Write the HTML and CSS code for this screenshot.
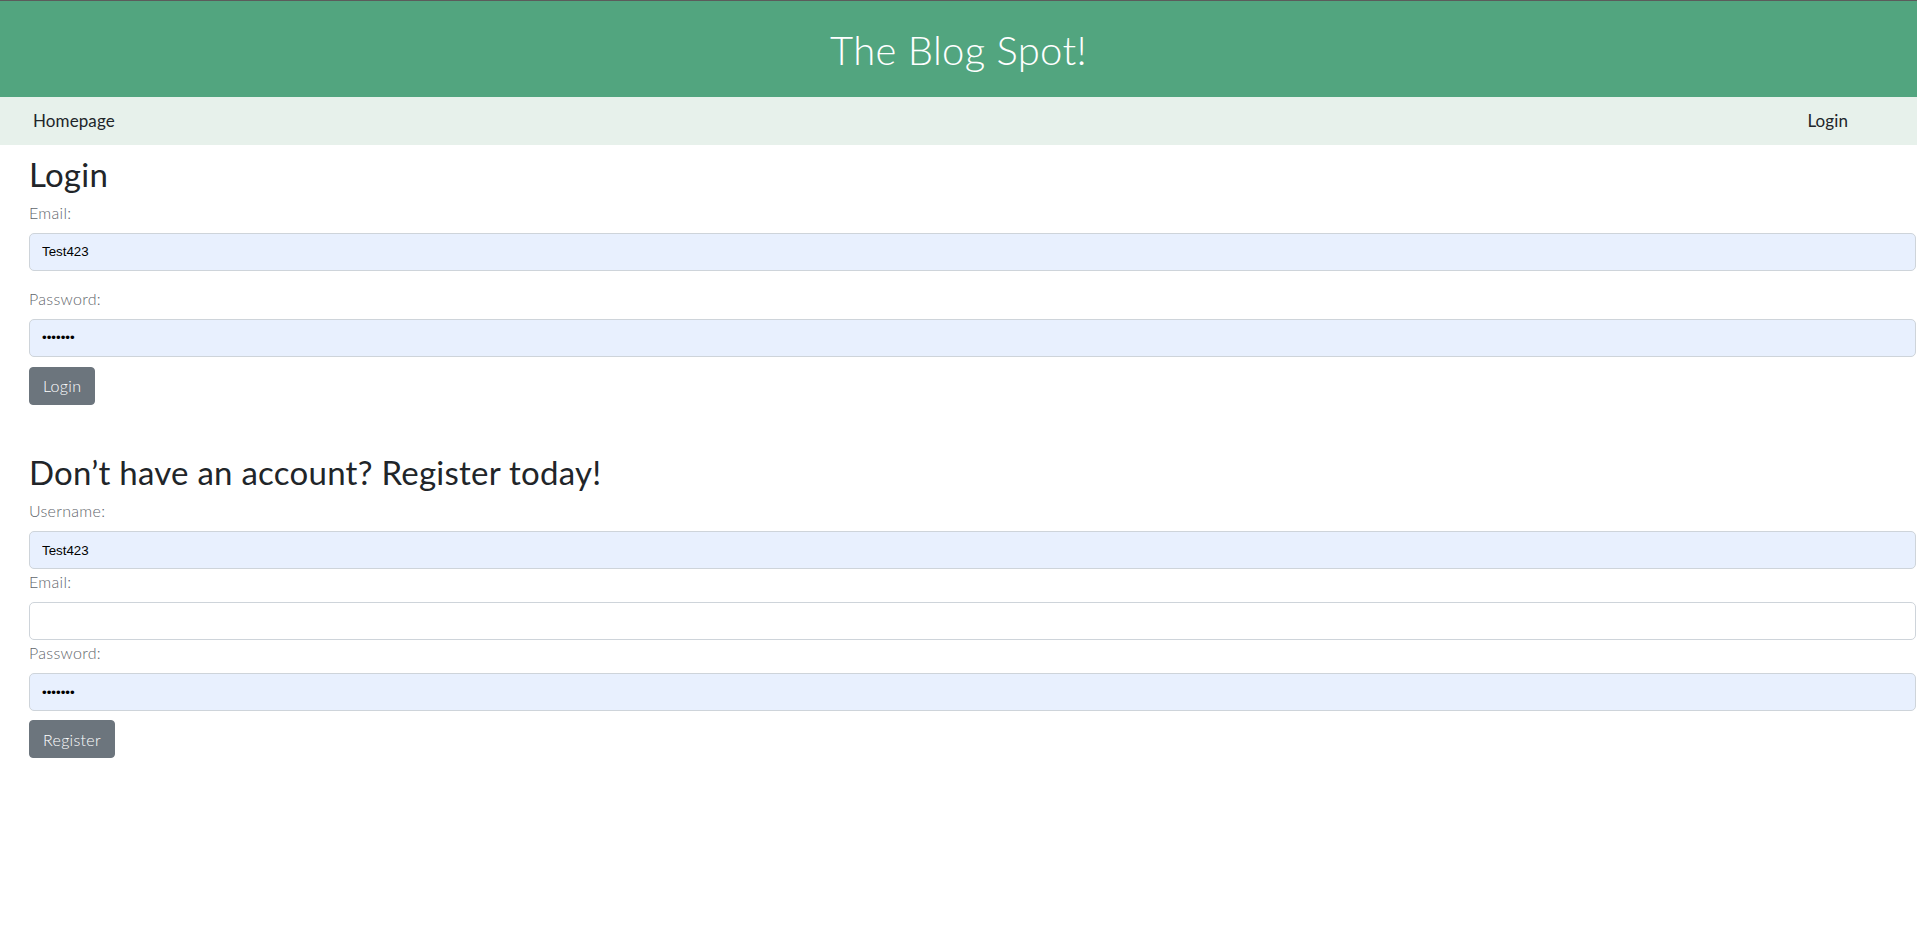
FILE: index.html
```html
<!DOCTYPE html>
<html lang="en">
<head>
<meta charset="utf-8">
<title>The Blog Spot!</title>
<link rel="stylesheet" href="styles.css">
</head>
<body>
<header class="masthead">
  <h1 class="site-title">The Blog Spot!</h1>
</header>
<nav class="navbar">
  <a class="nav-link" href="#">Homepage</a>
  <a class="nav-link" href="#">Login</a>
</nav>
<main class="content">
  <section class="login-section">
    <h2 class="section-title">Login</h2>
    <form class="form">
      <div class="field field-spaced">
        <label class="field-label" for="login-email">Email:</label>
        <input class="field-input autofilled" id="login-email" type="text" value="Test423">
      </div>
      <div class="field">
        <label class="field-label" for="login-password">Password:</label>
        <input class="field-input autofilled" id="login-password" type="password" value="1234567">
      </div>
      <button class="btn" type="button">Login</button>
    </form>
  </section>
  <section class="register-section">
    <h2 class="section-title">Don’t have an account? Register today!</h2>
    <form class="form">
      <div class="field">
        <label class="field-label" for="reg-username">Username:</label>
        <input class="field-input autofilled" id="reg-username" type="text" value="Test423">
      </div>
      <div class="field">
        <label class="field-label" for="reg-email">Email:</label>
        <input class="field-input" id="reg-email" type="text" value="">
      </div>
      <div class="field">
        <label class="field-label" for="reg-password">Password:</label>
        <input class="field-input autofilled" id="reg-password" type="password" value="1234567">
      </div>
      <button class="btn btn-tight" type="button">Register</button>
    </form>
  </section>
</main>
</body>
</html>
```
FILE: styles.css
```css
* {
  box-sizing: border-box;
}

html, body {
  margin: 0;
  padding: 0;
}

body {
  font-family: Lato, "Noto Sans", sans-serif;
  color: #212529;
  background: #fff;
  font-size: 16px;
  line-height: 1.5;
}

.masthead {
  height: 97px;
  background: #52a57f;
  border-top: 1px solid #5b5b5b;
  display: flex;
  align-items: center;
  justify-content: center;
}

.site-title {
  margin: 0;
  font-size: 40px;
  font-weight: 300;
  color: #fff;
  line-height: 1.2;
  letter-spacing: 0.3px;
  padding-top: 2px;
}

.navbar {
  height: 48px;
  background: #e7f1eb;
  display: flex;
  align-items: center;
  justify-content: space-between;
  padding: 0 69px 0 33px;
}

.nav-link {
  font-size: 17px;
  color: #212529;
  text-decoration: none;
  letter-spacing: 0.1px;
}

.content {
  padding: 0 1px 0 29px;
}

.section-title {
  font-size: 33px;
  font-weight: 400;
  line-height: 1.2;
  margin: 10px 0 6px;
  color: #212529;
  letter-spacing: 0.25px;
}

.login-section {
  margin-bottom: 48px;
}

.register-section .section-title {
  margin-top: 0;
  margin-bottom: 7px;
}

.form {
  display: flex;
  flex-direction: column;
  align-items: flex-start;
}

.field {
  width: 100%;
  display: flex;
  flex-direction: column;
  margin-bottom: 1px;
}

.field-spaced {
  margin-bottom: 16px;
}

.field-label {
  font-size: 16px;
  font-weight: 300;
  line-height: 24px;
  color: #5f666c;
  margin-bottom: 8px;
  letter-spacing: 0.3px;
}

.field-input {
  width: 100%;
  height: 38px;
  border: 1px solid #ced4da;
  border-radius: 5px;
  padding: 0 12px;
  font-family: "Liberation Sans", Arial, sans-serif;
  font-size: 13.33px;
  color: #000;
  background: #fff;
  outline: none;
}

.field-input.autofilled {
  background: #e8f0fe;
}

.btn {
  margin-top: 9px;
  height: 38px;
  padding: 0 13px;
  border: 1px solid #6c757d;
  border-radius: 4px;
  background: #6c757d;
  color: #fff;
  font-family: Lato, "Noto Sans", sans-serif;
  font-size: 16px;
  font-weight: 300;
  letter-spacing: 0.3px;
}

.btn-tight {
  margin-top: 8px;
}
```
